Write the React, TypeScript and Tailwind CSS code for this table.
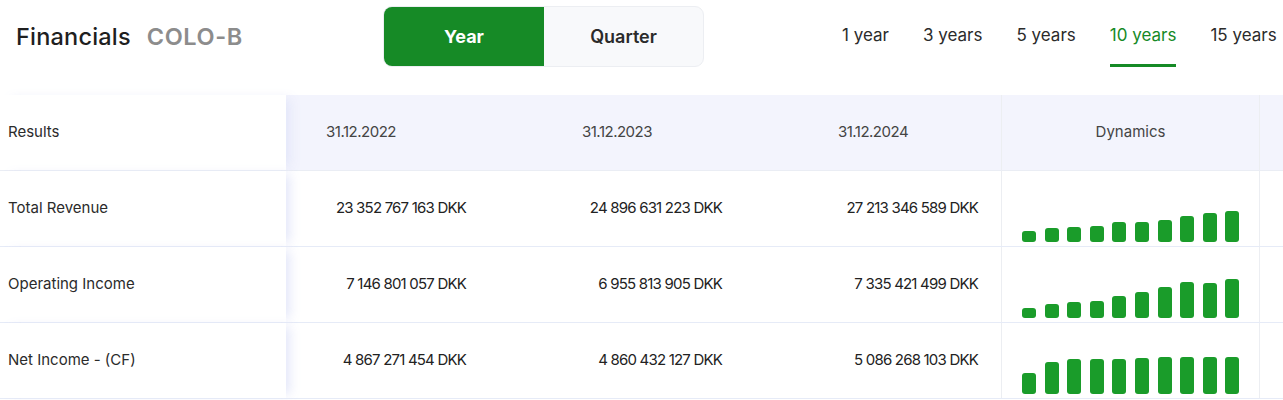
import React from 'react';

const periods = ['1 year', '3 years', '5 years', '10 years', '15 years'];

const rows = [
  {
    label: 'Total Revenue',
    values: ['23 352 767 163 DKK', '24 896 631 223 DKK', '27 213 346 589 DKK'],
    bars: [11, 14, 15, 16, 20, 20, 22, 26, 29, 31],
  },
  {
    label: 'Operating Income',
    values: ['7 146 801 057 DKK', '6 955 813 905 DKK', '7 335 421 499 DKK'],
    bars: [10, 14, 16, 17, 22, 26, 31, 36, 35, 39],
  },
  {
    label: 'Net Income - (CF)',
    values: ['4 867 271 454 DKK', '4 860 432 127 DKK', '5 086 268 103 DKK'],
    bars: [21, 32, 35, 35, 35, 36, 37, 37, 37, 37],
  },
];

const dates = ['31.12.2022', '31.12.2023', '31.12.2024'];

const dateCols = ['w-[203px] pr-[53px]', 'w-[256px]', 'w-[256px]'];
const valueCols = ['w-[203px]', 'w-[256px]', 'w-[256px]'];

const stickyShadow = 'relative z-10 shadow-[8px_0_10px_-4px_rgba(225,228,248,0.9)]';

const App: React.FC = () => {
  return (
    <div className="w-[1283px] h-[400px] overflow-hidden bg-white text-[#2b2b2b] font-['Inter',_'Liberation_Sans',_sans-serif]">
      {/* Top bar */}
      <div className="flex items-start h-[67px]">
        <div className="flex items-center h-[73px] w-[383px] shrink-0 pl-4 gap-[16px] whitespace-nowrap">
          <span className="text-[23.5px] font-medium tracking-[0.2px] text-[#1f1f1f]">Financials</span>
          <span className="text-[23.5px] font-semibold tracking-[0.6px] text-[#8c8c8c]">COLO-B</span>
        </div>
        <div className="flex shrink-0 h-[61px] mt-[6px] w-[321px] rounded-[9px] overflow-hidden border border-[#eceef2] bg-[#f8f9fb]">
          <button className="w-[160px] bg-[#168a26] text-white text-[18px] font-bold">Year</button>
          <button className="flex-1 text-[18px] font-semibold text-[#2b2b2b]">Quarter</button>
        </div>
        <div className="flex h-[67px] ml-[138px] whitespace-nowrap">
          {periods.map((p) => {
            const active = p === '10 years';
            return (
              <div
                key={p}
                className={`flex shrink-0 items-center mr-[34px] h-full border-b-[3px] pt-[8px] text-[17px] ${
                  active ? 'border-[#168a26] text-[#168a26]' : 'border-transparent text-[#2b2b2b]'
                }`}
              >
                {p}
              </div>
            );
          })}
        </div>
      </div>

      {/* Table */}
      <div className="mt-[28px] text-[15px]">
        <div className="flex h-[76px] border-b border-[#eaedf4]">
          <div className={`w-[286px] shrink-0 bg-white flex items-center pl-2 text-[#2b2b2b] ${stickyShadow}`}>Results</div>
          {dates.map((d, i) => (
            <div
              key={d}
              className={`${dateCols[i]} shrink-0 bg-[#f3f4fd] flex items-center justify-center tracking-[-0.5px] text-[#444]`}
            >
              {d}
            </div>
          ))}
          <div className="w-[258px] shrink-0 bg-[#f3f4fd] border-l border-[#eceef2] flex items-center justify-center text-[#444]">
            Dynamics
          </div>
          <div className="flex-1 bg-[#f3f4fd] border-l border-[#eceef2]" />
        </div>

        {rows.map((r) => (
          <div key={r.label} className="flex h-[76px] border-b border-[#e6ebf7]">
            <div className={`w-[286px] shrink-0 bg-white flex items-center pl-2 ${stickyShadow}`}>{r.label}</div>
            {r.values.map((v, i) => (
              <div
                key={i}
                className={`${valueCols[i]} shrink-0 flex items-center justify-end pr-[23px] tracking-[-0.8px] text-[#222]`}
              >
                {v}
              </div>
            ))}
            <div className="w-[258px] shrink-0 border-l border-[#eceef2] flex items-end gap-[8.6px] pl-[20px] pb-[4px]">
              {r.bars.map((h, i) => (
                <div key={i} className="w-[14px] rounded-[3px] bg-[#1a9c2a]" style={{ height: h }} />
              ))}
            </div>
            <div className="flex-1 border-l border-[#eceef2]" />
          </div>
        ))}
      </div>
    </div>
  );
};

export default App;
